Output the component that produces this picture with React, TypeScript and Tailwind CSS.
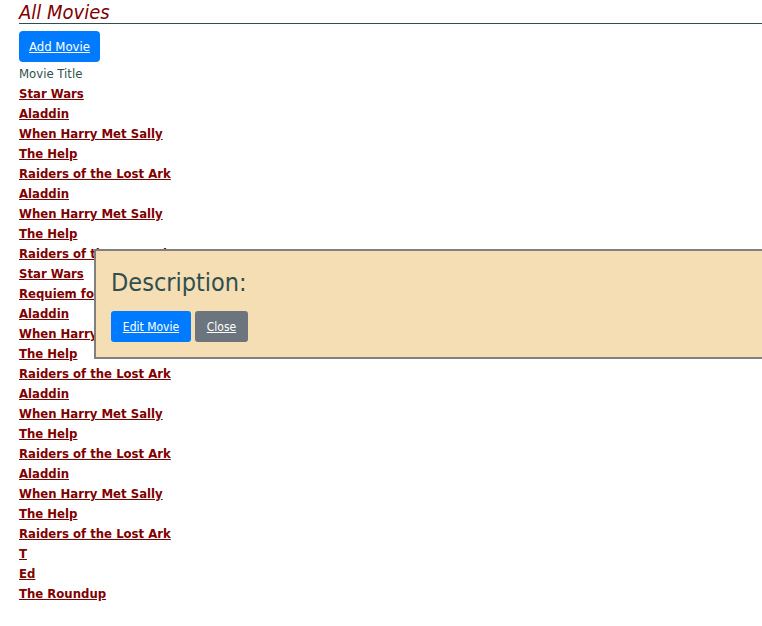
const movies = [
  "Star Wars",
  "Aladdin",
  "When Harry Met Sally",
  "The Help",
  "Raiders of the Lost Ark",
  "Aladdin",
  "When Harry Met Sally",
  "The Help",
  "Raiders of the Lost Ark",
  "Star Wars",
  "Requiem for a Dream",
  "Aladdin",
  "When Harry Met Sally",
  "The Help",
  "Raiders of the Lost Ark",
  "Aladdin",
  "When Harry Met Sally",
  "The Help",
  "Raiders of the Lost Ark",
  "Aladdin",
  "When Harry Met Sally",
  "The Help",
  "Raiders of the Lost Ark",
  "T",
  "Ed",
  "The Roundup",
];

const font = "font-['DejaVu_Sans_Condensed','DejaVu_Sans',sans-serif]";

export default function App() {
  return (
    <div className={`relative h-[626px] w-[762px] overflow-hidden bg-white ${font} text-[#2f4f4f]`}>
      <div className="pl-[19px]">
        <h1 className="h-[24px] border-b border-[#2f4f4f] text-[20px] leading-[24px] italic text-[#800000]">
          All Movies
        </h1>
        <button className="mt-[7px] h-[31px] w-[81px] rounded-[4px] bg-[#007bff] text-[13px] text-white underline">
          Add Movie
        </button>
        <div className="mt-[2px] h-[20px] text-[13px] leading-[20px]">Movie Title</div>
        <ul>
          {movies.map((m, i) => (
            <li key={i} className="h-[20px] text-[13px] leading-[20px]">
              <a href="#" className="font-bold text-[#800000] underline">
                {m}
              </a>
            </li>
          ))}
        </ul>
      </div>

      <div className="absolute left-[94px] top-[249px] h-[110px] w-[700px] border-2 border-[#808080] bg-[#f5deb3] px-[15px] pt-[16px]">
        <h2 className="h-[32px] text-[25px] leading-[32px]">Description:</h2>
        <div className="mt-[12px] flex gap-[4px]">
          <button className="h-[31px] w-[80px] rounded-[3px] bg-[#007bff] text-[12px] text-white underline">
            Edit Movie
          </button>
          <button className="h-[31px] w-[53px] rounded-[3px] bg-[#6c757d] text-[12px] text-white underline">
            Close
          </button>
        </div>
      </div>
    </div>
  );
}
